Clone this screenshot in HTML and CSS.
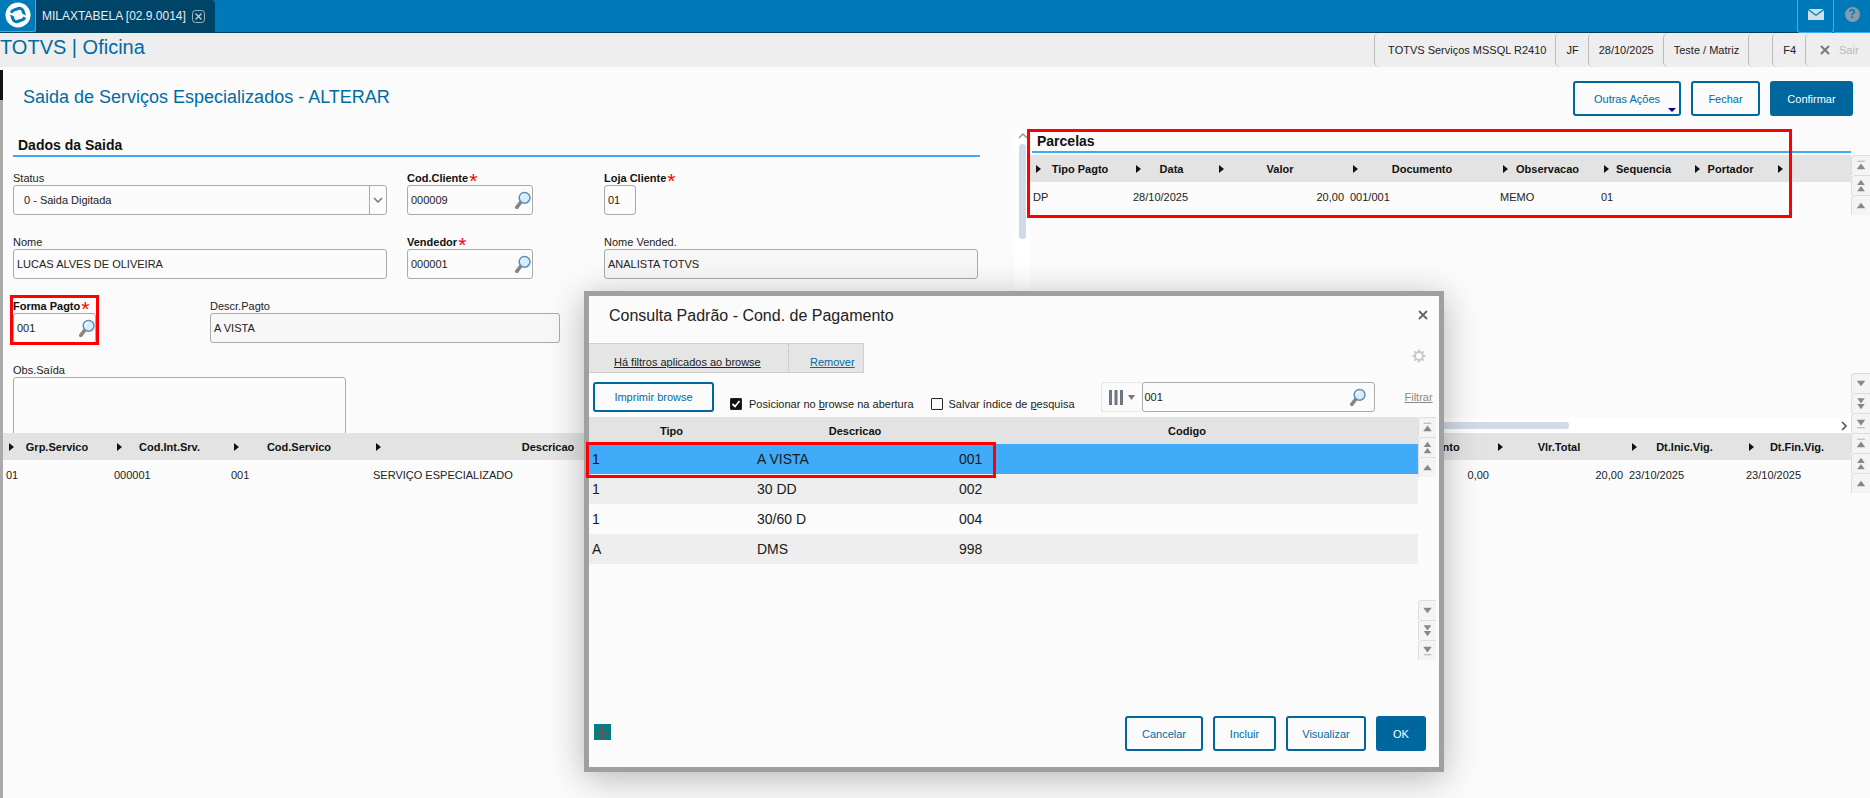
FILE: index.html
```html
<!DOCTYPE html>
<html lang="pt">
<head>
<meta charset="utf-8">
<title>TOTVS | Oficina</title>
<link rel="stylesheet" href="styles.css">
</head>
<body>
<svg class="defs" width="0" height="0">
  <symbol id="lupa" viewBox="0 0 16 19">
    <path d="M5.500 11.500 1.800 16.400" stroke="#8f8475" stroke-width="3.600" stroke-linecap="round"/>
    <circle cx="9.600" cy="6.800" r="5.400" fill="#d9ecf9" stroke="#5d8fb8" stroke-width="1.500"/>
    <path d="M6.400 7a3.400 3.400 0 0 1 3-3.600" fill="none" stroke="#fff" stroke-width="1.400"/>
  </symbol>
  <symbol id="s-top" viewBox="0 0 18 20"><path d="M5 5.500h8" stroke="#aaa"/><path d="M9 8l4.500 6h-9z" fill="#888"/></symbol>
  <symbol id="s-up2" viewBox="0 0 18 20"><path d="M9 4l4 5.500H5zM9 10.500l4 5.500H5z" fill="#888"/></symbol>
  <symbol id="s-up" viewBox="0 0 18 20"><path d="M9 7l4.500 6h-9z" fill="#888"/></symbol>
  <symbol id="s-down" viewBox="0 0 18 20"><path d="M9 13l4.500-6h-9z" fill="#888"/></symbol>
  <symbol id="s-down2" viewBox="0 0 18 20"><path d="M9 10l4-5.500H5zM9 16l4-5.500H5z" fill="#888"/></symbol>
  <symbol id="s-bot" viewBox="0 0 18 20"><path d="M9 12l4.500-6h-9z" fill="#888"/><path d="M5 14.500h8" stroke="#aaa"/></symbol>
</svg>

<header class="topbar">
  <div class="logo">
    <svg width="28" height="28" viewBox="0 0 28 28">
      <circle cx="14" cy="14" r="12.500" fill="#fff"/>
      <rect x="8" y="8" width="12" height="12" rx="3.500" transform="rotate(-18 14 14)" fill="none" stroke="#0079b8" stroke-width="3"/>
      <path d="M4 11.500 12 15M24 16.500 16 13" stroke="#fff" stroke-width="2"/>
    </svg>
  </div>
  <div class="tab">
    <span>MILAXTABELA [02.9.0014]</span>
    <svg class="tab-close" width="13" height="13" viewBox="0 0 13 13"><rect x=".5" y=".5" width="12" height="12" rx="3" fill="none" stroke="#9db4c4"/><path d="M3.500 3.500l6 6m0-6l-6 6" stroke="#c4d2dc" stroke-width="1.300"/></svg>
  </div>
  <div class="top-actions">
    <div class="top-btn">
      <svg width="16" height="11" viewBox="0 0 16 11"><path d="M0 1.200V11h16V1.200L8 7z" fill="#cfe0ea"/><path d="M.6 0h14.800L8 5.400z" fill="#cfe0ea"/></svg>
    </div>
    <div class="top-btn help"><span>?</span></div>
  </div>
</header>

<nav class="subbar">
  <div class="app-title">TOTVS | Oficina</div>
  <div class="sub-cells">
    <div class="sub-cell first">TOTVS Serviços MSSQL R2410</div>
    <div class="sub-cell">JF</div>
    <div class="sub-cell">28/10/2025</div>
    <div class="sub-cell">Teste / Matriz</div>
    <div class="sub-cell empty"></div>
    <div class="sub-cell">F4</div>
    <div class="sub-cell sair">
      <svg width="10" height="10" viewBox="0 0 10 10"><path d="M1 1l8 8m0-8L1 9" stroke="#6f7a85" stroke-width="2"/></svg>
      <span>Sair</span>
    </div>
  </div>
</nav>

<div class="page">
  <div class="edge"></div>
  <main class="body">
    <div class="page-head">
      <h1 class="page-title">Saida de Serviços Especializados - ALTERAR</h1>
      <div class="head-actions">
        <button class="btn outras">Outras Ações<i class="caret"></i></button>
        <button class="btn fechar">Fechar</button>
        <button class="btn primary confirmar">Confirmar</button>
      </div>
    </div>

    <div class="area">
      <section class="left">
        <h2 class="section-title">Dados da Saida</h2>
        <div class="frow first-row">
          <div class="field w-374"><label class="lbl">Status</label>
            <div class="inp select"><span class="sel-text">0 - Saida Digitada</span>
              <span class="sel-arrow"><svg width="10" height="6" viewBox="0 0 10 6"><path d="M1 1l4 4 4-4" fill="none" stroke="#777" stroke-width="1.500"/></svg></span>
            </div>
          </div>
          <div class="field w-126 gap-20"><label class="lbl req">Cod.Cliente<em>*</em></label>
            <div class="inp"><span>000009</span><svg class="lupa"><use href="#lupa"/></svg></div>
          </div>
          <div class="field w-32 gap-71"><label class="lbl req">Loja Cliente<em>*</em></label>
            <div class="inp"><span>01</span></div>
          </div>
        </div>
        <div class="frow">
          <div class="field w-374"><label class="lbl">Nome</label>
            <div class="inp"><span>LUCAS ALVES DE OLIVEIRA</span></div>
          </div>
          <div class="field w-126 gap-20"><label class="lbl req">Vendedor<em>*</em></label>
            <div class="inp"><span>000001</span><svg class="lupa"><use href="#lupa"/></svg></div>
          </div>
          <div class="field w-374 gap-71"><label class="lbl">Nome Vended.</label>
            <div class="inp off"><span>ANALISTA TOTVS</span></div>
          </div>
        </div>
        <div class="frow">
          <div class="field w-83"><label class="lbl req">Forma Pagto<em>*</em></label>
            <div class="inp"><span>001</span><svg class="lupa tight"><use href="#lupa"/></svg></div>
          </div>
          <div class="field w-350 gap-114"><label class="lbl">Descr.Pagto</label>
            <div class="inp off"><span>A VISTA</span></div>
          </div>
        </div>
        <div class="frow">
          <div class="field w-333"><label class="lbl">Obs.Saída</label>
            <div class="inp memo"></div>
          </div>
        </div>
      </section>

      <div class="vscroll">
        <svg class="vs-chev" width="10" height="6" viewBox="0 0 10 6"><path d="M1 5l4-4 4 4" fill="none" stroke="#999" stroke-width="1.500"/></svg>
        <div class="vs-thumb"></div>
      </div>

      <section class="right">
        <div class="right-main">
          <h2 class="section-title parcelas">Parcelas</h2>
          <div class="grid-head cols-parc">
            <div class="th">Tipo Pagto</div><div class="th">Data</div><div class="th">Valor</div><div class="th">Documento</div><div class="th">Observacao</div><div class="th">Sequencia</div><div class="th">Portador</div><div class="th"></div>
          </div>
          <div class="grid-row cols-parc">
            <div class="td">DP</div><div class="td">28/10/2025</div><div class="td num">20,00</div><div class="td">001/001</div><div class="td">MEMO</div><div class="td">01</div><div class="td"></div><div class="td"></div>
          </div>
          <div class="hscroll">
            <div class="hs-thumb"></div>
            <svg width="6" height="10" viewBox="0 0 6 10"><path d="M1 1l4 4-4 4" fill="none" stroke="#555" stroke-width="1.600"/></svg>
          </div>
        </div>
        <div class="sbtns between">
          <div class="sgroup">
            <div class="sbtn"><svg><use href="#s-top"/></svg></div>
            <div class="sbtn"><svg><use href="#s-up2"/></svg></div>
            <div class="sbtn"><svg><use href="#s-up"/></svg></div>
          </div>
          <div class="sgroup">
            <div class="sbtn"><svg><use href="#s-down"/></svg></div>
            <div class="sbtn"><svg><use href="#s-down2"/></svg></div>
            <div class="sbtn"><svg><use href="#s-bot"/></svg></div>
          </div>
        </div>
      </section>
    </div>

    <div class="bottom">
      <div class="bottom-table">
        <div class="grid-head cols-serv">
          <div class="th">Grp.Servico</div><div class="th">Cod.Int.Srv.</div><div class="th">Cod.Servico</div><div class="th">Descricao</div><div class="th blank"></div><div class="th">Vlr.Desconto</div><div class="th">Vlr.Total</div><div class="th">Dt.Inic.Vig.</div><div class="th">Dt.Fin.Vig.</div>
        </div>
        <div class="grid-row cols-serv">
          <div class="td">01</div><div class="td">000001</div><div class="td">001</div><div class="td">SERVIÇO ESPECIALIZADO</div><div class="td"></div><div class="td num">0,00</div><div class="td num">20,00</div><div class="td">23/10/2025</div><div class="td">23/10/2025</div>
        </div>
      </div>
      <div class="sgroup">
        <div class="sbtn"><svg><use href="#s-top"/></svg></div>
        <div class="sbtn"><svg><use href="#s-up2"/></svg></div>
        <div class="sbtn"><svg><use href="#s-up"/></svg></div>
      </div>
    </div>
  </main>
</div>

<div class="mark mark-parcelas"></div>
<div class="mark mark-forma"></div>

<div class="modal">
  <div class="modal-head">
    <h3 class="modal-title">Consulta Padrão - Cond. de Pagamento</h3>
    <svg class="modal-x" width="10" height="10" viewBox="0 0 10 10"><path d="M1 1l8 8m0-8L1 9" stroke="#5c6672" stroke-width="1.800"/></svg>
  </div>
  <div class="filter-line">
    <div class="filter-bar">
      <a class="f-text">Há filtros aplicados ao browse</a>
      <a class="f-rem">Remover</a>
    </div>
    <svg class="gear" width="14" height="14" viewBox="0 0 14 14"><circle cx="7" cy="7" r="4" fill="none" stroke="#c9c9c9" stroke-width="2"/><path d="M7 .5v3M7 10.500v3M.5 7h3M10.500 7h3M2.400 2.400l2 2M9.600 9.600l2 2M11.600 2.400l-2 2M4.400 9.600l-2 2" stroke="#c9c9c9" stroke-width="2"/></svg>
  </div>
  <div class="m-toolbar">
    <button class="btn imprimir">Imprimir browse</button>
    <label class="chk first-chk"><i class="box on"><svg width="12" height="12" viewBox="0 0 12 12"><path d="M2.500 6l2.500 2.500 4.500-5.500" fill="none" stroke="#fff" stroke-width="1.800"/></svg></i><span>Posicionar no <u>b</u>rowse na abertura</span></label>
    <label class="chk second-chk"><i class="box"></i><span>Salvar índice de <u>p</u>esquisa</span></label>
    <div class="col-btn">
      <svg width="14" height="15" viewBox="0 0 14 15"><path d="M0 0h3v15H0zM5.500 0h3v15h-3zM11 0h3v15h-3z" fill="#6d7683"/></svg>
      <svg width="7" height="5" viewBox="0 0 7 5"><path d="M0 0h7L3.500 5z" fill="#777"/></svg>
    </div>
    <div class="search"><span>001</span><svg class="lupa"><use href="#lupa"/></svg></div>
    <a class="filtrar">Filtrar</a>
  </div>
  <div class="m-table">
    <div class="m-grid">
      <div class="m-head"><div>Tipo</div><div>Descricao</div><div>Codigo</div></div>
      <div class="m-row sel"><div>1</div><div>A VISTA</div><div>001</div></div>
      <div class="m-row alt"><div>1</div><div>30 DD</div><div>002</div></div>
      <div class="m-row"><div>1</div><div>30/60 D</div><div>004</div></div>
      <div class="m-row alt"><div>A</div><div>DMS</div><div>998</div></div>
    </div>
    <div class="sbtns between m-sbtns">
      <div class="sgroup">
        <div class="sbtn"><svg><use href="#s-top"/></svg></div>
        <div class="sbtn"><svg><use href="#s-up2"/></svg></div>
        <div class="sbtn"><svg><use href="#s-up"/></svg></div>
      </div>
      <div class="sgroup">
        <div class="sbtn"><svg><use href="#s-down"/></svg></div>
        <div class="sbtn"><svg><use href="#s-down2"/></svg></div>
        <div class="sbtn"><svg><use href="#s-bot"/></svg></div>
      </div>
    </div>
  </div>
  <div class="m-foot">
    <div class="move">
      <svg width="17" height="16" viewBox="0 0 17 16"><path d="M8.500 1v14M2 8h13M8.500 1 6.500 3.500M8.500 1l2 2.500M8.500 15l-2-2.500M8.500 15l2-2.500M2 8l2.500-2M2 8l2.500 2M15 8l-2.500-2M15 8l-2.500 2" fill="none" stroke="#7a4a55"/></svg>
    </div>
    <div class="m-actions">
      <button class="btn b-cancel">Cancelar</button>
      <button class="btn b-incl">Incluir</button>
      <button class="btn b-vis">Visualizar</button>
      <button class="btn primary b-ok">OK</button>
    </div>
  </div>
  <div class="mark mark-row"></div>
</div>
</body>
</html>
```

FILE: styles.css
```css
* { box-sizing: border-box; }
html, body { margin: 0; padding: 0; }
body {
  width: 1870px; height: 798px; overflow: hidden; position: relative;
  background: #fbfbfb; color: #222;
  font: 11px/14px "Liberation Sans", Arial, sans-serif;
}
.defs { position: absolute; }
h1, h2, h3 { margin: 0; font-weight: normal; }
button { font-family: inherit; cursor: default; }

/* top bar */
.topbar { height: 33px; display: flex; background: #0079b8; border-bottom: 1px solid #00405f; }
.logo {
  width: 36px; height: 32px; display: flex; align-items: flex-start; justify-content: center; padding-top: 1px;
  border-right: 1px solid #3fa9f5; border-bottom: 1px solid #3fa9f5; border-bottom-right-radius: 3px;
}
.tab {
  width: 179px; height: 32px; background: #004468; color: #e8eef2; border-top-right-radius: 4px;
  display: flex; align-items: center; padding-left: 6px; font-size: 12px;
}
.tab-close { margin-left: 6px; }
.top-actions { margin-left: auto; display: flex; }
.top-btn {
  width: 37px; height: 33px; display: flex; align-items: center; justify-content: center;
  border: 1px solid #3fa9f5; border-top: 0; border-bottom-left-radius: 3px; border-bottom-right-radius: 3px; padding-bottom: 4px;
}
.top-btn.help { width: 36px; border-right: 0; border-left: 0; border-bottom-right-radius: 0; border-bottom-left-radius: 0; }
.help span {
  width: 15px; height: 15px; border-radius: 50%; background: #8a9ba8; color: #0079b8;
  font: bold 12px/15px "Liberation Sans", sans-serif; text-align: center;
}

/* sub bar */
.subbar { height: 34px; background: #eee; display: flex; justify-content: space-between; }
.app-title { font-size: 20px; line-height: 28px; color: #006ba3; }
.sub-cells { display: flex; font-size: 11px; }
.sub-cell {
  display: flex; align-items: center; padding: 0 9px 0 10px; color: #222;
  border-left: 1px solid #bbb; border-top-left-radius: 5px; border-bottom-left-radius: 5px;
}
.sub-cell.first { padding-left: 13px; }
.sub-cell.empty { width: 24px; padding: 0; }
.sub-cell.sair { width: 65px; padding: 0 0 0 14px; gap: 9px; color: #b9b9b9; }

/* page */
.page { height: 731px; display: flex; }
.edge {
  width: 3px; margin-top: 3px;
  background: linear-gradient(#111 0, #111 30px, #aaa 30px);
}
.body { width: 1867px; display: flex; flex-direction: column; }
.page-head { height: 49px; display: flex; justify-content: space-between; padding: 14px 17px 0 20px; }
.page-title { font-size: 18px; line-height: 22px; color: #006ba3; margin-top: 5px; }
.head-actions { display: flex; gap: 10px; }
.btn {
  height: 35px; padding: 0; background: #fbfbfb; color: #006ba3; font-size: 11px;
  border: 2px solid #00669e; border-radius: 3px; position: relative;
}
.btn.primary { background: #00669e; color: #fff; }
.outras { width: 108px; }
.fechar { width: 69px; }
.confirmar { width: 83px; font-weight: normal; }
.caret {
  position: absolute; right: 3px; bottom: 2px; width: 0; height: 0;
  border-left: 4px solid transparent; border-right: 4px solid transparent; border-top: 4px solid #00008b;
}

/* area */
.area { height: 317px; display: flex; overflow: hidden; }
.left { width: 1012px; padding: 0 35px 0 10px; }
.section-title {
  font-size: 14px; line-height: 16px; font-weight: bold; color: #111;
  padding: 21px 0 2px 5px; border-bottom: 2px solid #3fa9f5;
}
.frow { display: flex; margin-top: 20px; }
.frow.first-row { margin-top: 14px; }
.field { flex: none; }
.w-374 { width: 374px; }
.w-350 { width: 350px; }
.w-333 { width: 333px; }
.w-126 { width: 126px; }
.w-83 { width: 83px; }
.w-32 { width: 32px; }
.gap-20 { margin-left: 20px; }
.gap-71 { margin-left: 71px; }
.gap-114 { margin-left: 114px; }
.lbl { display: block; height: 14px; white-space: nowrap; }
.lbl.req { font-weight: bold; color: #111; }
.lbl em { color: #f00; font-style: normal; font-weight: normal; font-size: 21px; line-height: 0; margin-left: 1px; vertical-align: -6px; }
.inp {
  height: 30px; border: 1px solid #aaa; border-radius: 3px; background: #fbfbfb;
  display: flex; align-items: center; padding-left: 3px; position: relative; color: #222;
}
.inp.off { background: #f7f7f7; }
.inp.memo { height: 90px; }
.select { padding-left: 0; justify-content: space-between; }
.sel-text { padding-left: 10px; }
.sel-arrow { width: 17px; height: 28px; border-left: 1px solid #aaa; display: flex; align-items: center; justify-content: center; }
.lupa { width: 16px; height: 19px; margin-left: auto; margin-right: 1px; flex: none; }
.lupa.tight { margin-right: 0; }

.vscroll { width: 15px; margin-top: 14px; background: #fff; padding-top: 3px; display: flex; flex-direction: column; align-items: center; }
.vs-thumb { width: 7px; height: 95px; margin-top: 5px; border-radius: 3px; background: #d0dbe5; }

.right { width: 840px; display: flex; }
.right-main { width: 821px; display: flex; flex-direction: column; }
.section-title.parcelas { padding: 16px 0 1px 5px; margin-left: 2px; line-height: 18px; }
.right-main .grid-head { margin-top: 2px; }

.grid-head { height: 27px; background: #e3e3e3; display: grid; }
.grid-row { height: 30px; display: grid; }
.cols-parc { grid-template-columns: 100px 83px 134px 150px 101px 91px 83px 79px; }
.cols-serv { grid-template-columns: 108px 117px 142px 356px 634px 132px 134px 117px 108px; }
.th {
  position: relative; font-weight: bold; color: #111; text-align: center; line-height: 28px; white-space: nowrap;
}
.th::before {
  content: ""; position: absolute; left: 6px; top: 10px; width: 0; height: 0;
  border-left: 5px solid #111; border-top: 4px solid transparent; border-bottom: 4px solid transparent;
}
.th.blank::before { display: none; }
.td { padding: 0 3px; line-height: 30px; white-space: nowrap; color: #222; }
.td.num { text-align: right; }

.hscroll {
  margin-top: auto; height: 15px; background: #fff; display: flex; align-items: center; justify-content: space-between; padding-right: 4px;
}
.hs-thumb { width: 539px; height: 7px; border-radius: 3px; background: #d0dbe5; }

.sbtns { width: 19px; flex: none; display: flex; flex-direction: column; }
.between { justify-content: space-between; }
.right .sbtns { padding-top: 39px; }
.sgroup { display: flex; flex-direction: column; }
.sbtn {
  width: 19px; height: 20px; background: #f4f4f4; border: 1px solid #ddd; border-bottom: 0; border-right: 0; border-top-left-radius: 4px;
  display: flex;
}
.sbtn svg { width: 18px; height: 19px; }

.bottom { display: flex; }
.bottom-table { width: 1848px; }

/* overlays */
.mark { position: absolute; border: 3px solid #f00; }
.mark-parcelas { left: 1027px; top: 129px; width: 765px; height: 89px; }
.mark-forma { left: 10px; top: 295px; width: 89px; height: 50px; }
.mark-row { left: -3px; top: 146px; width: 410px; height: 36px; }

.modal {
  position: absolute; left: 584px; top: 291px; width: 860px; height: 481px;
  background: #fbfbfb; border: 5px solid #a0a0a0;
  box-shadow: 0 6px 34px rgba(0,0,0,.28);
  display: flex; flex-direction: column;
}
.modal-head { height: 47px; display: flex; justify-content: space-between; padding: 10px 11px 0 20px; }
.modal-title { font-size: 16px; line-height: 19px; color: #222; }
.modal-x { margin-top: 4px; }
.filter-line { height: 30px; display: flex; justify-content: space-between; padding-right: 13px; }
.filter-bar {
  width: 275px; height: 30px; background: #e5e5e5; border: 1px solid #d0d0d0; border-left: 0;
  display: flex; padding-top: 11px;
}
.f-text { width: 200px; padding-left: 25px; text-decoration: underline; color: #222; border-right: 1px dotted #bbb; margin-top: -11px; padding-top: 11px; }
.f-rem { padding-left: 21px; text-decoration: underline; color: #006ba3; }
.gear { margin-top: 6px; }
.m-toolbar { height: 30px; margin-top: 9px; padding-left: 4px; display: flex; }
.imprimir { width: 121px; height: 30px; }
.chk { display: flex; align-items: center; height: 14px; margin-top: 15px; color: #222; }
.first-chk { margin-left: 16px; }
.first-chk .box { margin-right: 7px; }
.second-chk { margin-left: 17px; }
.box { width: 12px; height: 12px; border: 1px solid #222; margin-right: 6px; border-radius: 1px; display: block; }
.box.on { background: #111; }
.box svg { display: block; margin: -1px; }
.col-btn {
  width: 41px; height: 30px; margin-left: 26px; border: 1px solid #e6e6e6; border-right: 0; border-radius: 3px 0 0 3px;
  display: flex; align-items: center; justify-content: center; gap: 5px;
}
.search {
  width: 233px; height: 30px; border: 1px solid #aaa; border-radius: 3px; padding: 0 7px 0 2px;
  display: flex; align-items: center;
}
.filtrar { margin: 8px 0 0 30px; text-decoration: underline; color: #888; }
.m-table { display: flex; height: 243px; margin-top: 5px; }
.m-grid { width: 829px; }
.m-head {
  height: 27px; background: #e3e3e3; font-weight: bold; line-height: 28px; color: #111; text-align: center;
  display: grid; grid-template-columns: 165px 202px 462px;
}
.m-row {
  height: 30px; line-height: 30px; font-size: 14px; color: #1a1a1a; padding-left: 3px;
  display: grid; grid-template-columns: 165px 202px 459px;
}
.m-row.sel { background: #3fabf9; }
.m-row.alt { background: #eee; }
.m-sbtns { width: 18px; }
.m-sbtns .sbtn { width: 18px; }
.m-foot { flex: 1; display: flex; justify-content: space-between; padding: 56px 13px 0 5px; }
.move { width: 17px; height: 16px; margin-top: 8px; background: #008080; display: flex; }
.m-actions { display: flex; gap: 10px; }
.b-cancel { width: 78px; }
.b-incl { width: 63px; }
.b-vis { width: 80px; }
.b-ok { width: 50px; }
```
